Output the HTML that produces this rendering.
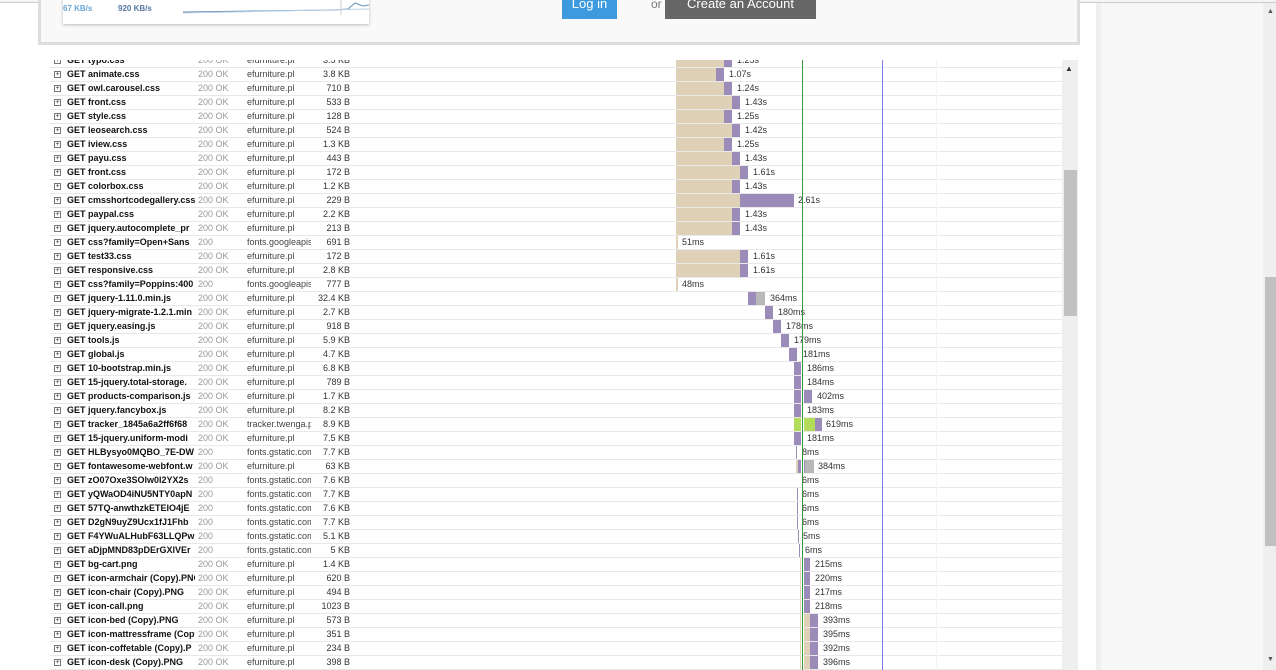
<!DOCTYPE html><html><head><meta charset="utf-8"><style>
*{margin:0;padding:0;box-sizing:border-box}
body{width:1276px;height:670px;overflow:hidden;background:#fff;font-family:"Liberation Sans",Tahoma,sans-serif;position:relative}
.a{position:absolute}
#top{left:38px;top:-3px;width:1042px;height:48px;background:#f9f9f9;border:3px solid #ddd;border-top:none}
#card{left:22px;top:0;width:306px;height:27px;background:#fff;box-shadow:0 1px 3px rgba(0,0,0,.25)}
#tbl{left:50px;top:60px;width:1012px;height:610px;overflow:hidden}
#in{position:absolute;left:0;top:2px;width:1012px;height:610px}
.r{position:absolute;left:0;width:1012px;height:14px;border-bottom:1px solid #e8e8e8;font-size:9px;line-height:13px;white-space:nowrap}
.r span{position:absolute;top:0;overflow:hidden}
.pl{left:4px;top:3px!important;width:7px;height:7px;border:1px solid #777;font-size:7px;line-height:5px;text-align:center;color:#333}
.n{left:17px;width:128px;font-weight:bold;color:#111}
.s{left:148px;color:#999}
.h{left:197px;width:64px;color:#444}
.z{left:250px;width:50px;text-align:right;color:#333}
.b{position:absolute;top:0;height:13px}
.t{background:#dfd0b8}.p{background:#9a8bb9}.g{background:#b8b8b8}.gr{background:#b3dc5a}
.l{position:absolute;top:0;font-size:9px;color:#333}
</style></head><body>
<div class="a" style="left:0;top:0;width:1276px;height:3px;border-bottom:1px solid #ccc;background:#f4f4f4"></div>
<div class="a" id="top"><div class="a" id="card">
<div class="a" style="left:0;top:7px;font-size:8px;font-weight:bold;color:#6aa6d6">67 KB/s</div>
<div class="a" style="left:55px;top:7px;font-size:8px;font-weight:bold;color:#5577a0">920 KB/s</div>
<svg class="a" style="left:120px;top:0" width="186" height="20"><path d="M0 15 L150 13 L165 12 L172 6 L180 9 L186 8" stroke="#6a8fb5" fill="none"/><path d="M0 16 L186 12" stroke="#b7d0e8" fill="none"/><line x1="158" y1="0" x2="158" y2="18" stroke="#ccc"/></svg>
</div>
<div class="a" style="left:521px;top:3px;width:55px;height:19px;background:#3d9ade;color:#fff;font-size:13px;text-align:center;line-height:8px">Log in</div>
<div class="a" style="left:610px;top:2px;font-size:12px;color:#777;line-height:10px">or</div>
<div class="a" style="left:624px;top:3px;width:151px;height:19px;background:#666;color:#fff;font-size:13px;text-align:center;line-height:8px">Create an Account</div>
</div>
<div class="a" style="left:1096px;top:3px;width:5px;height:667px;background:#efefef"></div>
<div class="a" style="left:1101px;top:3px;width:162px;height:667px;background:#f7f7f7"></div>
<div class="a" style="left:1263px;top:3px;width:13px;height:667px;background:#efefef"></div>
<div class="a" style="left:1265px;top:277px;width:11px;height:269px;background:#c0c0c0"></div>
<div class="a" style="left:1267px;top:8px;font-size:7px;color:#555">▲</div>
<div class="a" style="left:1267px;top:656px;font-size:7px;color:#555">▼</div>
<div class="a" style="left:1062px;top:60px;width:16px;height:610px;background:#efefef"></div>
<div class="a" style="left:1064px;top:170px;width:13px;height:146px;background:#c1c1c1"></div>
<div class="a" style="left:1065px;top:64px;font-size:8px;color:#333">▲</div>
<div class="a" id="tbl"><div id="in">
<div class="r" style="top:-8px"><span class="pl">+</span><span class="n">GET typo.css</span><span class="s">200 OK</span><span class="h">efurniture.pl</span><span class="z">3.5 KB</span><div class="b t" style="left:626px;width:48px"></div><div class="b p" style="left:674px;width:8px"></div><span class="l" style="left:687px">1.25s</span></div>
<div class="r" style="top:6px"><span class="pl">+</span><span class="n">GET animate.css</span><span class="s">200 OK</span><span class="h">efurniture.pl</span><span class="z">3.8 KB</span><div class="b t" style="left:626px;width:40px"></div><div class="b p" style="left:666px;width:8px"></div><span class="l" style="left:679px">1.07s</span></div>
<div class="r" style="top:20px"><span class="pl">+</span><span class="n">GET owl.carousel.css</span><span class="s">200 OK</span><span class="h">efurniture.pl</span><span class="z">710 B</span><div class="b t" style="left:626px;width:48px"></div><div class="b p" style="left:674px;width:8px"></div><span class="l" style="left:687px">1.24s</span></div>
<div class="r" style="top:34px"><span class="pl">+</span><span class="n">GET front.css</span><span class="s">200 OK</span><span class="h">efurniture.pl</span><span class="z">533 B</span><div class="b t" style="left:626px;width:56px"></div><div class="b p" style="left:682px;width:8px"></div><span class="l" style="left:695px">1.43s</span></div>
<div class="r" style="top:48px"><span class="pl">+</span><span class="n">GET style.css</span><span class="s">200 OK</span><span class="h">efurniture.pl</span><span class="z">128 B</span><div class="b t" style="left:626px;width:48px"></div><div class="b p" style="left:674px;width:8px"></div><span class="l" style="left:687px">1.25s</span></div>
<div class="r" style="top:62px"><span class="pl">+</span><span class="n">GET leosearch.css</span><span class="s">200 OK</span><span class="h">efurniture.pl</span><span class="z">524 B</span><div class="b t" style="left:626px;width:56px"></div><div class="b p" style="left:682px;width:8px"></div><span class="l" style="left:695px">1.42s</span></div>
<div class="r" style="top:76px"><span class="pl">+</span><span class="n">GET iview.css</span><span class="s">200 OK</span><span class="h">efurniture.pl</span><span class="z">1.3 KB</span><div class="b t" style="left:626px;width:48px"></div><div class="b p" style="left:674px;width:8px"></div><span class="l" style="left:687px">1.25s</span></div>
<div class="r" style="top:90px"><span class="pl">+</span><span class="n">GET payu.css</span><span class="s">200 OK</span><span class="h">efurniture.pl</span><span class="z">443 B</span><div class="b t" style="left:626px;width:56px"></div><div class="b p" style="left:682px;width:8px"></div><span class="l" style="left:695px">1.43s</span></div>
<div class="r" style="top:104px"><span class="pl">+</span><span class="n">GET front.css</span><span class="s">200 OK</span><span class="h">efurniture.pl</span><span class="z">172 B</span><div class="b t" style="left:626px;width:64px"></div><div class="b p" style="left:690px;width:8px"></div><span class="l" style="left:703px">1.61s</span></div>
<div class="r" style="top:118px"><span class="pl">+</span><span class="n">GET colorbox.css</span><span class="s">200 OK</span><span class="h">efurniture.pl</span><span class="z">1.2 KB</span><div class="b t" style="left:626px;width:56px"></div><div class="b p" style="left:682px;width:8px"></div><span class="l" style="left:695px">1.43s</span></div>
<div class="r" style="top:132px"><span class="pl">+</span><span class="n">GET cmsshortcodegallery.css</span><span class="s">200 OK</span><span class="h">efurniture.pl</span><span class="z">229 B</span><div class="b t" style="left:626px;width:64px"></div><div class="b p" style="left:690px;width:54px"></div><span class="l" style="left:748px">2.61s</span></div>
<div class="r" style="top:146px"><span class="pl">+</span><span class="n">GET paypal.css</span><span class="s">200 OK</span><span class="h">efurniture.pl</span><span class="z">2.2 KB</span><div class="b t" style="left:626px;width:56px"></div><div class="b p" style="left:682px;width:8px"></div><span class="l" style="left:695px">1.43s</span></div>
<div class="r" style="top:160px"><span class="pl">+</span><span class="n">GET jquery.autocomplete_pr</span><span class="s">200 OK</span><span class="h">efurniture.pl</span><span class="z">213 B</span><div class="b t" style="left:626px;width:56px"></div><div class="b p" style="left:682px;width:8px"></div><span class="l" style="left:695px">1.43s</span></div>
<div class="r" style="top:174px"><span class="pl">+</span><span class="n">GET css?family=Open+Sans</span><span class="s">200</span><span class="h">fonts.googleapis</span><span class="z">691 B</span><div class="b t" style="left:626px;width:2px"></div><span class="l" style="left:632px">51ms</span></div>
<div class="r" style="top:188px"><span class="pl">+</span><span class="n">GET test33.css</span><span class="s">200 OK</span><span class="h">efurniture.pl</span><span class="z">172 B</span><div class="b t" style="left:626px;width:64px"></div><div class="b p" style="left:690px;width:8px"></div><span class="l" style="left:703px">1.61s</span></div>
<div class="r" style="top:202px"><span class="pl">+</span><span class="n">GET responsive.css</span><span class="s">200 OK</span><span class="h">efurniture.pl</span><span class="z">2.8 KB</span><div class="b t" style="left:626px;width:64px"></div><div class="b p" style="left:690px;width:8px"></div><span class="l" style="left:703px">1.61s</span></div>
<div class="r" style="top:216px"><span class="pl">+</span><span class="n">GET css?family=Poppins:400</span><span class="s">200</span><span class="h">fonts.googleapis</span><span class="z">777 B</span><div class="b t" style="left:626px;width:2px"></div><span class="l" style="left:632px">48ms</span></div>
<div class="r" style="top:230px"><span class="pl">+</span><span class="n">GET jquery-1.11.0.min.js</span><span class="s">200 OK</span><span class="h">efurniture.pl</span><span class="z">32.4 KB</span><div class="b p" style="left:698px;width:8px"></div><div class="b g" style="left:706px;width:9px"></div><span class="l" style="left:720px">364ms</span></div>
<div class="r" style="top:244px"><span class="pl">+</span><span class="n">GET jquery-migrate-1.2.1.min</span><span class="s">200 OK</span><span class="h">efurniture.pl</span><span class="z">2.7 KB</span><div class="b p" style="left:715px;width:8px"></div><span class="l" style="left:728px">180ms</span></div>
<div class="r" style="top:258px"><span class="pl">+</span><span class="n">GET jquery.easing.js</span><span class="s">200 OK</span><span class="h">efurniture.pl</span><span class="z">918 B</span><div class="b p" style="left:723px;width:8px"></div><span class="l" style="left:736px">178ms</span></div>
<div class="r" style="top:272px"><span class="pl">+</span><span class="n">GET tools.js</span><span class="s">200 OK</span><span class="h">efurniture.pl</span><span class="z">5.9 KB</span><div class="b p" style="left:731px;width:8px"></div><span class="l" style="left:744px">179ms</span></div>
<div class="r" style="top:286px"><span class="pl">+</span><span class="n">GET global.js</span><span class="s">200 OK</span><span class="h">efurniture.pl</span><span class="z">4.7 KB</span><div class="b p" style="left:739px;width:8px"></div><span class="l" style="left:753px">181ms</span></div>
<div class="r" style="top:300px"><span class="pl">+</span><span class="n">GET 10-bootstrap.min.js</span><span class="s">200 OK</span><span class="h">efurniture.pl</span><span class="z">6.8 KB</span><div class="b p" style="left:744px;width:7px"></div><span class="l" style="left:757px">186ms</span></div>
<div class="r" style="top:314px"><span class="pl">+</span><span class="n">GET 15-jquery.total-storage.</span><span class="s">200 OK</span><span class="h">efurniture.pl</span><span class="z">789 B</span><div class="b p" style="left:744px;width:7px"></div><span class="l" style="left:757px">184ms</span></div>
<div class="r" style="top:328px"><span class="pl">+</span><span class="n">GET products-comparison.js</span><span class="s">200 OK</span><span class="h">efurniture.pl</span><span class="z">1.7 KB</span><div class="b p" style="left:744px;width:7px"></div><div class="b p" style="left:754px;width:8px"></div><span class="l" style="left:767px">402ms</span></div>
<div class="r" style="top:342px"><span class="pl">+</span><span class="n">GET jquery.fancybox.js</span><span class="s">200 OK</span><span class="h">efurniture.pl</span><span class="z">8.2 KB</span><div class="b p" style="left:744px;width:7px"></div><span class="l" style="left:757px">183ms</span></div>
<div class="r" style="top:356px"><span class="pl">+</span><span class="n">GET tracker_1845a6a2ff6f68</span><span class="s">200 OK</span><span class="h">tracker.twenga.pl</span><span class="z">8.9 KB</span><div class="b gr" style="left:744px;width:7px"></div><div class="b gr" style="left:754px;width:11px"></div><div class="b p" style="left:765px;width:7px"></div><span class="l" style="left:776px">619ms</span></div>
<div class="r" style="top:370px"><span class="pl">+</span><span class="n">GET 15-jquery.uniform-modi</span><span class="s">200 OK</span><span class="h">efurniture.pl</span><span class="z">7.5 KB</span><div class="b p" style="left:744px;width:7px"></div><span class="l" style="left:757px">181ms</span></div>
<div class="r" style="top:384px"><span class="pl">+</span><span class="n">GET HLBysyo0MQBO_7E-DW</span><span class="s">200</span><span class="h">fonts.gstatic.com</span><span class="z">7.7 KB</span><div class="b p" style="left:746px;width:1px"></div><span class="l" style="left:752px">8ms</span></div>
<div class="r" style="top:398px"><span class="pl">+</span><span class="n">GET fontawesome-webfont.w</span><span class="s">200 OK</span><span class="h">efurniture.pl</span><span class="z">63 KB</span><div class="b t" style="left:746px;width:2px"></div><div class="b p" style="left:748px;width:3px"></div><div class="b p" style="left:754px;width:1px"></div><div class="b g" style="left:755px;width:9px"></div><span class="l" style="left:768px">384ms</span></div>
<div class="r" style="top:412px"><span class="pl">+</span><span class="n">GET zO07Oxe3SOlw0l2YX2s</span><span class="s">200</span><span class="h">fonts.gstatic.com</span><span class="z">7.6 KB</span><span class="l" style="left:752px">6ms</span></div>
<div class="r" style="top:426px"><span class="pl">+</span><span class="n">GET yQWaOD4iNU5NTY0apN</span><span class="s">200</span><span class="h">fonts.gstatic.com</span><span class="z">7.7 KB</span><div class="b p" style="left:747px;width:1px"></div><span class="l" style="left:752px">6ms</span></div>
<div class="r" style="top:440px"><span class="pl">+</span><span class="n">GET 57TQ-anwthzkETEIO4jE</span><span class="s">200</span><span class="h">fonts.gstatic.com</span><span class="z">7.6 KB</span><div class="b p" style="left:747px;width:1px"></div><span class="l" style="left:752px">6ms</span></div>
<div class="r" style="top:454px"><span class="pl">+</span><span class="n">GET D2gN9uyZ9Ucx1fJ1Fhb</span><span class="s">200</span><span class="h">fonts.gstatic.com</span><span class="z">7.7 KB</span><div class="b p" style="left:747px;width:1px"></div><span class="l" style="left:752px">6ms</span></div>
<div class="r" style="top:468px"><span class="pl">+</span><span class="n">GET F4YWuALHubF63LLQPw</span><span class="s">200</span><span class="h">fonts.gstatic.com</span><span class="z">5.1 KB</span><div class="b p" style="left:748px;width:1px"></div><span class="l" style="left:753px">5ms</span></div>
<div class="r" style="top:482px"><span class="pl">+</span><span class="n">GET aDjpMND83pDErGXlVEr</span><span class="s">200</span><span class="h">fonts.gstatic.com</span><span class="z">5 KB</span><div class="b p" style="left:749px;width:1px"></div><span class="l" style="left:755px">6ms</span></div>
<div class="r" style="top:496px"><span class="pl">+</span><span class="n">GET bg-cart.png</span><span class="s">200 OK</span><span class="h">efurniture.pl</span><span class="z">1.4 KB</span><div class="b t" style="left:750px;width:1px"></div><div class="b p" style="left:754px;width:6px"></div><span class="l" style="left:765px">215ms</span></div>
<div class="r" style="top:510px"><span class="pl">+</span><span class="n">GET icon-armchair (Copy).PNG</span><span class="s">200 OK</span><span class="h">efurniture.pl</span><span class="z">620 B</span><div class="b t" style="left:750px;width:1px"></div><div class="b p" style="left:754px;width:6px"></div><span class="l" style="left:765px">220ms</span></div>
<div class="r" style="top:524px"><span class="pl">+</span><span class="n">GET icon-chair (Copy).PNG</span><span class="s">200 OK</span><span class="h">efurniture.pl</span><span class="z">494 B</span><div class="b t" style="left:750px;width:1px"></div><div class="b p" style="left:754px;width:6px"></div><span class="l" style="left:765px">217ms</span></div>
<div class="r" style="top:538px"><span class="pl">+</span><span class="n">GET icon-call.png</span><span class="s">200 OK</span><span class="h">efurniture.pl</span><span class="z">1023 B</span><div class="b t" style="left:750px;width:1px"></div><div class="b p" style="left:754px;width:6px"></div><span class="l" style="left:765px">218ms</span></div>
<div class="r" style="top:552px"><span class="pl">+</span><span class="n">GET icon-bed (Copy).PNG</span><span class="s">200 OK</span><span class="h">efurniture.pl</span><span class="z">573 B</span><div class="b t" style="left:750px;width:1px"></div><div class="b t" style="left:754px;width:6px"></div><div class="b p" style="left:760px;width:8px"></div><span class="l" style="left:773px">393ms</span></div>
<div class="r" style="top:566px"><span class="pl">+</span><span class="n">GET icon-mattressframe (Copy</span><span class="s">200 OK</span><span class="h">efurniture.pl</span><span class="z">351 B</span><div class="b t" style="left:750px;width:1px"></div><div class="b t" style="left:754px;width:6px"></div><div class="b p" style="left:760px;width:8px"></div><span class="l" style="left:773px">395ms</span></div>
<div class="r" style="top:580px"><span class="pl">+</span><span class="n">GET icon-coffetable (Copy).P</span><span class="s">200 OK</span><span class="h">efurniture.pl</span><span class="z">234 B</span><div class="b t" style="left:750px;width:1px"></div><div class="b t" style="left:754px;width:6px"></div><div class="b p" style="left:760px;width:8px"></div><span class="l" style="left:773px">392ms</span></div>
<div class="r" style="top:594px"><span class="pl">+</span><span class="n">GET icon-desk (Copy).PNG</span><span class="s">200 OK</span><span class="h">efurniture.pl</span><span class="z">398 B</span><div class="b t" style="left:750px;width:1px"></div><div class="b t" style="left:754px;width:6px"></div><div class="b p" style="left:760px;width:8px"></div><span class="l" style="left:773px">396ms</span></div>
</div>
<div class="a" style="left:752px;top:0;width:1px;height:610px;background:#3a9a3a"></div>
<div class="a" style="left:832px;top:0;width:1px;height:610px;background:#7b7bf0"></div>
<div class="a" style="left:886px;top:0;width:1px;height:610px;background:#f4f4f4"></div>
</div>
</body></html>
